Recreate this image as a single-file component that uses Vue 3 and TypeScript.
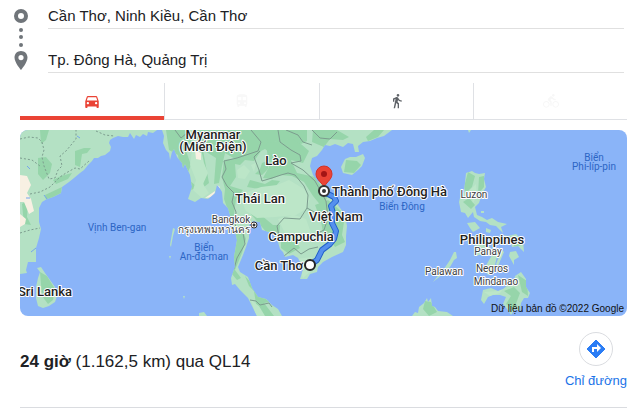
<script setup lang="ts">
import { ref } from 'vue'

interface MapLabel {
  text: string
  x: number
  y: number
  kind: 'country' | 'place' | 'sea'
  anchor?: 'start' | 'middle' | 'end'
}

const origin = ref('Cần Thơ, Ninh Kiều, Cần Thơ')
const destination = ref('Tp. Đông Hà, Quảng Trị')
const mode = ref('car')

const labels: MapLabel[] = [
  { text: 'Myanmar', x: 213, y: 139, kind: 'country' },
  { text: '(Miến Điện)', x: 213, y: 151, kind: 'country' },
  { text: 'Lào', x: 276, y: 165, kind: 'country' },
  { text: 'Thái Lan', x: 260, y: 203, kind: 'country' },
  { text: 'Campuchia', x: 301, y: 241, kind: 'country' },
  { text: 'Việt Nam', x: 336, y: 221, kind: 'country' },
  { text: 'Philippines', x: 492, y: 244, kind: 'country' },
  { text: 'Sri Lanka', x: 45, y: 296, kind: 'country' },
  { text: 'Cần Thơ', x: 303, y: 270, kind: 'country', anchor: 'end' },
  { text: 'Thành phố Đông Hà', x: 332, y: 196, kind: 'country', anchor: 'start' },
  { text: 'Bangkok', x: 231, y: 223, kind: 'place' },
  { text: 'กรุงเทพมหานคร', x: 214, y: 233, kind: 'place' },
  { text: 'Luzon', x: 474, y: 198, kind: 'place' },
  { text: 'Panay', x: 488, y: 255, kind: 'place' },
  { text: 'Negros', x: 492, y: 272, kind: 'place' },
  { text: 'Mindanao', x: 496, y: 285, kind: 'place' },
  { text: 'Palawan', x: 444, y: 275, kind: 'place' },
  { text: 'Vịnh Ben-gan', x: 117, y: 231, kind: 'sea' },
  { text: 'Biển', x: 204, y: 251, kind: 'sea' },
  { text: 'An-đa-man', x: 204, y: 260, kind: 'sea' },
  { text: 'Biển Đông', x: 402, y: 210, kind: 'sea' },
  { text: 'Biển', x: 594, y: 161, kind: 'sea' },
  { text: 'Phi-líp-pin', x: 594, y: 170, kind: 'sea' },
]
</script>

<template>
  <main class="directions">
    <form class="route" @submit.prevent>
      <svg class="route-marks" viewBox="0 0 16 66" aria-hidden="true">
        <circle cx="8" cy="8" r="5" fill="none" stroke="#70757a" stroke-width="4" />
        <g fill="#70757a">
          <circle cx="8" cy="22" r="2" />
          <circle cx="8" cy="29" r="2" />
          <circle cx="8" cy="37" r="2" />
          <path fill-rule="evenodd" d="M8 43c-3.700 0-6.500 2.800-6.500 6.500C1.500 54.500 8 62 8 62s6.500-7.500 6.500-12.500C14.500 45.800 11.700 43 8 43zm0 4a2.600 2.600 0 1 1 0 5.200A2.600 2.600 0 0 1 8 47z" />
        </g>
      </svg>
      <div class="fields">
        <input v-model="origin" class="field" type="text" aria-label="Điểm đi" />
        <input v-model="destination" class="field" type="text" aria-label="Điểm đến" />
      </div>
    </form>

    <nav class="modes">
      <button class="mode" :class="{ active: mode === 'car' }" type="button" aria-label="Lái xe" @click="mode = 'car'">
        <svg class="mode-icon" viewBox="0 0 24 24" fill="#ea4335">
          <path d="M18.920 5.010C18.720 4.420 18.160 4 17.500 4h-11c-.66 0-1.210.42-1.420 1.010L3 11v8c0 .55.45 1 1 1h1c.55 0 1-.45 1-1v-1h12v1c0 .55.45 1 1 1h1c.55 0 1-.45 1-1v-8l-2.080-5.990zM6.500 15c-.83 0-1.500-.67-1.500-1.500S5.670 12 6.500 12s1.500.67 1.500 1.500S7.330 15 6.500 15zm11 0c-.83 0-1.500-.67-1.500-1.500s.67-1.500 1.500-1.500 1.500.67 1.500 1.500-.67 1.500-1.500 1.500zM5 10l1.500-4.500h11L19 10H5z" />
        </svg>
      </button>
      <button class="mode" :class="{ active: mode === 'transit' }" type="button" aria-label="Phương tiện công cộng" disabled>
        <svg class="mode-icon small" viewBox="0 0 24 24" fill="#f8f8f8">
          <path d="M12 2c-4.420 0-8 .5-8 4v10c0 .88.39 1.670 1 2.220V20c0 .55.45 1 1 1h1c.55 0 1-.45 1-1v-1h8v1c0 .55.45 1 1 1h1c.55 0 1-.45 1-1v-1.780c.61-.55 1-1.340 1-2.220V6c0-3.500-3.580-4-8-4zM7.500 17a1.500 1.500 0 1 1 0-3 1.500 1.500 0 0 1 0 3zm3.500-6H6V6h5v5zm2 0V6h5v5h-5zm3.500 6a1.500 1.500 0 1 1 0-3 1.500 1.500 0 0 1 0 3z" />
        </svg>
      </button>
      <button class="mode" :class="{ active: mode === 'walk' }" type="button" aria-label="Đi bộ" @click="mode = 'walk'">
        <svg class="mode-icon small" viewBox="0 0 24 24" fill="#5f6368">
          <path d="M13.500 5.500c1.100 0 2-.9 2-2s-.9-2-2-2-2 .9-2 2 .9 2 2 2zM9.800 8.900L7 23h2.100l1.800-8 2.100 2v6h2v-7.500l-2.100-2 .6-3C14.800 12 16.800 13 19 13v-2c-1.900 0-3.500-1-4.300-2.400l-1-1.600c-.4-.6-1-1-1.700-1-.3 0-.5.1-.8.1L6 8.300V13h2V9.600l1.800-.7" />
        </svg>
      </button>
      <button class="mode" :class="{ active: mode === 'bike' }" type="button" aria-label="Đạp xe" disabled>
        <svg class="mode-icon small" viewBox="0 0 24 24" fill="#f7f7f7">
          <path d="M15.500 5.500c1.100 0 2-.9 2-2s-.9-2-2-2-2 .9-2 2 .9 2 2 2zM5 12c-2.800 0-5 2.200-5 5s2.200 5 5 5 5-2.200 5-5-2.200-5-5-5zm0 8.500c-1.900 0-3.500-1.600-3.500-3.500s1.600-3.500 3.500-3.500 3.500 1.600 3.500 3.500-1.600 3.500-3.500 3.500zm5.800-10l2.400-2.400.8.8c1.300 1.300 3 2.100 5.100 2.100V9c-1.500 0-2.700-.6-3.600-1.500l-1.900-1.900c-.5-.4-1-.6-1.600-.6s-1.100.2-1.400.6L7.800 8.400c-.4.4-.6.9-.6 1.400 0 .6.2 1.100.6 1.400L11 14v5h2v-6.200l-2.200-2.300zM19 12c-2.800 0-5 2.200-5 5s2.200 5 5 5 5-2.200 5-5-2.200-5-5-5zm0 8.500c-1.900 0-3.500-1.600-3.500-3.500s1.600-3.500 3.500-3.500 3.500 1.600 3.500 3.500-1.600 3.500-3.500 3.500z" />
        </svg>
      </button>
    </nav>

    <svg class="map" viewBox="20 130 607 186" preserveAspectRatio="xMidYMid slice" role="img" aria-label="Bản đồ">
      <defs>
        <clipPath id="land-shape">
          <!-- India -->
          <path d="M20 130H157L153 133 148 132 147 136 143 134 140 137 136 135 134 139 130 133 128 137 123 137 118 136 113 138 110 140 109 143 111 147 110 151 105 155 101 156 98 158 94 158 92 161 88 165 84 170 80 173 74 178 69 182 62 187 61 193 57 195 53 197 47 199 42 202 39 208V222L41 229 39 238 36 248V262H28L26 270 27 273 20 274z" />
          <!-- Sri Lanka -->
          <path d="M37 268L41 267 45 273 50 280 55 287 57 296 55 302 49 306 43 308 38 306 36 298V287L38 278 40 272z" />
          <!-- Indochina and the southern coast of China -->
          <path d="M162 130L164 136 163 143 166 150 169 153 170 160 172 152 174 149 177 157 182 163 183 168 185 164 190 175 192 187 188 199 195 202 201 198 208 199 215 193 217 185 219 187 222 192 223 203 228 208 230 215 231 225 235 231 237 240 234 257 235 267 231 278 232 285 235 284 240 290 244 294 248 298 253 308 257 316H282L278 309 272 305 266 299 258 297 252 288 248 277 240 272 238 267 243 255 246 247 249 238V225L253 221 260 222 262 230 273 233 278 242 280 249 283 252 285 257 293 255 298 258 302 265 303 270 300 279 307 279 310 274 317 272 318 267 323 262 332 257 343 252 346 245V236L347 226 345 215 338 205 330 193 327 186 318 182 313 175 310 166 312 158 317 156 322 150 325 145 330 146 335 144 343 147 348 143 353 144 355 152H359L358 146 363 142 370 141 377 138 384 136 392 130z" />
          <!-- Hainan -->
          <path d="M341 167L345 159 350 157 356 157 363 154 365 158 362 166 358 170 352 175 343 173z" />
          <!-- Luzon -->
          <path d="M466 173L472 171 475 173 479 174 485 173 484 179 486 187 482 194 479 203 475 207 477 215 482 217 487 220 492 218 498 222 507 224 501 227 503 233 496 226 490 225 486 222 480 221 474 217 473 212 468 218 465 213 461 212 459 202 460 198 464 192z" />
          <!-- Visayan islands -->
          <path d="M467 223L475 222 480 228 473 232 470 228z" />
          <path d="M474 236L482 235 488 242 484 245 476 247z" />
          <path d="M486 228L491 230 490 233 486 232zM502 235L508 236 516 234 523 241 524 252 518 246 512 247 510 238zM474 246L483 245 491 247 485 253 476 256z" />
          <path d="M492 255L498 253 493 272 488 275 484 269zM502 250L504 252 498 266 496 264zM510 252L516 251 519 257 514 260 514 265 509 256zM503 265L508 265 506 271 502 269z" />
          <!-- Mindanao -->
          <path d="M481 300L483 290 491 288 498 291 503 289 508 285 514 284 515 276 521 272 526 279 526 287 530 293 528 298 524 298 521 303 520 311 515 309 511 315 507 309 503 304 506 297 500 295 493 295 488 297 484 304z" />
          <!-- Palawan and Borneo -->
          <path d="M454 252L456 252 457 258 454 260 450 267 443 274 433 282 437 277 444 269 450 260z" />
          <path d="M412 316L415 312 418 313 419 307 424 303 427 298 428 302 431 298 432 306 435 307 438 311 447 312 453 316z" />
          <!-- Small islands -->
          <path d="M173 228L175 229 173 236 171 247 170 245zM169 256L171 256 170 259zM183 296L185 296 184 299zM199 313L204 312 207 316H199zM468 130H471L469 133zM481 211H484V213H481z" />
        </clipPath>
      </defs>

      <rect x="20" y="130" width="607" height="186" fill="#8ab4f8" />
      <g clip-path="url(#land-shape)">
        <rect x="20" y="130" width="607" height="186" fill="#b4e1c4" />

        <!-- Forests -->
        <g fill="#96d5aa">
          <path d="M40 130H49L46 140 41 144zM38 158L46 157 52 164 50 173 43 180 38 174zM75 151L84 148 91 148 87 153 82 154 80 167 75 165zM53 180L61 176 72 173 68 179 56 184zM45 195L62 187 61 197 46 200zM22 204L28 200 27 217 31 225 24 224z" />
          <path d="M166 130H185L193 143 184 145 191 165 186 177 198 188 190 190 180 169 178 155 169 150zM195 130H265L282 151 277 158 265 149 247 158 237 160 225 153 222 166 219 183 214 184 216 158 203 150 209 183 204 187 199 160z" />
          <path d="M224 160L239 158 248 150 261 151 254 161 245 160 240 165 235 164 236 177 230 186 243 190 236 199 234 214 238 221 231 219 224 199 225 189 222 177zM266 143L294 138 309 151 303 163 291 160 297 173 315 177 328 196 322 207 313 196 304 182 292 176 281 175 271 179 263 178 269 167z" />
          <path d="M262 163L269 160 268 169 262 175 255 174 260 169zM250 180L265 184 272 180 280 181 275 187 260 189 247 187zM250 213L261 215 273 225 280 225 279 237 268 234zM315 205L328 200 341 211 344 222 342 235 345 242 335 247 329 237 323 233 321 221zM281 238L294 236 300 248 289 254 281 248z" />
          <path d="M233 231L243 231 246 239 242 253 235 270 241 278 237 280 232 274zM245 276L249 286 254 291 256 304 263 316H274L264 303 270 302 263 297 254 286z" />
          <path d="M265 130H307V141L301 144 292 139 268 143zM313 130H337L349 137 343 140 330 139 324 147 312 142zM374 130H384L378 137 368 141 366 137zM346 160L357 161 361 165 354 173 344 172z" />
          <path d="M468 172L475 176 472 187 466 193 464 187zM479 177L484 176 484 187 478 194zM463 202L469 198 475 205 471 209zM477 239L489 241 484 246zM510 236L523 244 515 248zM518 275L527 281 528 296 522 292zM504 291L514 287 520 293 514 309 506 304 511 296z" />
          <path d="M40 272L47 276 55 289 53 300 48 304 42 296zM425 301L431 302 437 312 429 316 423 309z" />
        </g>

        <!-- Lowlands -->
        <g fill="#bce6c8">
          <path d="M194 137L201 149 204 163 208 173 203 184 209 193 202 198 193 190 196 180 190 165zM237 170L244 165 250 171 245 179 238 178zM251 165L256 163 254 172zM237 197L250 191 261 187 277 185 289 180 304 189 310 199 306 209 296 215 275 217 257 218 246 211 242 202zM278 219L294 215 306 219 311 233 298 239 285 233zM296 259L312 257 313 269 303 278z" />
          <path d="M251 300L259 306 265 316H256zM470 190L476 184 477 196 473 203zM484 292L498 291 503 289 500 293 490 296z" />
        </g>

        <!-- Dry ground -->
        <g fill="#f8f0e3">
          <path d="M20 175L27 176 31 185 27 193 31 199 34 211 29 214 24 202 20 202zM20 214L26 219 25 224 20 227zM195 150L201 153 201 160 196 159zM205 198L215 191 214 197zM217 185L220 187 219 190z" />
        </g>

        <g fill="none" stroke="#7c9c8e" stroke-width="1">
          <path stroke-dasharray="2 2" d="M20 139L29 137 38 138 42 142 44 150 42 157 44 166 49 179 55 178 58 170 62 166 60 156 66 151 71 145 76 139 76 130M20 158L32 160 40 166M30 194L40 192 50 187 60 177 66 173 75 168 80 169 89 161M20 233L30 230 40 228M96 131L105 135 114 136" />
          <path d="M175 130L181 138 187 133 195 134M251 130L261 142 258 151 237 158 224 161 226 169 222 177 227 186 234 193 232 202 236 212 235 225 243 233 245 244 237 258 234 269M260 151L254 157 259 170 262 181 272 178 281 175 288 173 295 175 304 186 308 195 307 208M278 130L280 142 291 150 300 155 301 161 291 163 303 170 315 181 326 201 328 218 324 230 316 234M286 130L298 135 303 142 312 145M279 236L277 226 284 218 300 219 307 208 318 214M284 256L294 248 301 254 309 249 318 247M250 300L256 301 260 305 269 303 272 307M312 130L320 138 330 139 337 132" />
        </g>
        <g fill="none" stroke="#74a5ed" stroke-width="1">
          <path d="M27 166L30 169M26 198L30 198M44 195L47 199M77 136L80 138M31 252L36 248" />
        </g>
      </g>

      <!-- Driving route -->
      <g fill="none" stroke-linecap="round" stroke-linejoin="round">
        <path stroke="#2361ca" stroke-width="6" d="M324 192L334 197 336 201 331 206 333 213 332 223 336 231 334 239 330 244 322 250 317 260 310 265" />
        <path stroke="#5590ee" stroke-width="4" d="M324 192L334 197 336 201 331 206 333 213 332 223 336 231 334 239 330 244 322 250 317 260 310 265" />
      </g>

      <circle cx="254" cy="225" r="3" fill="#fff" stroke="#333" stroke-width="1" />
      <circle cx="254" cy="225" r="1.500" fill="#333" />

      <text
        v-for="(label, i) in labels"
        :key="i"
        :x="label.x"
        :y="label.y"
        :text-anchor="label.anchor ?? 'middle'"
        class="label"
        :class="label.kind"
      >{{ label.text }}</text>

      <path d="M324 188c-1-5-8-8-8-14a8 8 0 0 1 16 0c0 6-7 9-8 14z" fill="#ea4335" stroke="#d33426" stroke-width="1" />
      <circle cx="324" cy="174" r="3" fill="#a31515" />
      <circle cx="324" cy="191" r="5" fill="#fff" stroke="#333" stroke-width="2" />
      <circle cx="324" cy="191" r="2" fill="#333" />
      <circle cx="310" cy="265" r="5" fill="#fff" stroke="#222" stroke-width="2" />

      <text class="credit" x="624" y="312" text-anchor="end">Dữ liệu bản đồ ©2022 Google</text>
    </svg>

    <section class="summary">
      <p class="trip"><strong>24 giờ</strong> (1.162,5 km) qua QL14</p>
      <a class="go" href="#directions">
        <span class="go-disc">
          <svg class="go-icon" viewBox="0 0 20 20" aria-hidden="true">
            <path d="M10 1L19 10 10 19 1 10z" fill="#2b7df5" stroke="#2b7df5" stroke-width="1" stroke-linejoin="round" />
            <path d="M6 13V8H11V5L15 9 11 13V10H8V13z" fill="#fff" />
          </svg>
        </span>
        <span>Chỉ đường</span>
      </a>
    </section>
  </main>
</template>

<style>
body {
  margin: 0;
  background: #fff;
}
</style>

<style scoped>
.directions {
  padding: 0 13px 0 20px;
  font-family: "Liberation Sans", Arial, sans-serif;
  color: #202124;
}

.route {
  display: flex;
  gap: 19px;
  margin-left: -7px;
  padding: 8px 3px 0 0;
}

.route-marks {
  flex: none;
  width: 16px;
  height: 66px;
}

.fields {
  flex: 1;
  margin-top: -8px;
  display: grid;
  grid-template-rows: 29px 29px;
  row-gap: 15px;
}

.field {
  box-sizing: border-box;
  width: 100%;
  min-width: 0;
  padding: 3px 0 0;
  border: 0;
  border-bottom: 1px solid #e0e0e0;
  outline: 0;
  background: transparent;
  color: #202124;
  font: 15px/24px "Liberation Sans", Arial, sans-serif;
}

.modes {
  display: grid;
  grid-template-columns: 145fr 155fr 154fr 153fr;
  margin-top: 9px;
  height: 37px;
}

.mode {
  display: flex;
  align-items: center;
  justify-content: center;
  padding: 0;
  border: 0;
  border-right: 1px solid #dfe1e5;
  border-bottom: 1px solid #dfe1e5;
  background: #fff;
}

.mode:last-child {
  border-right: 0;
}

.mode.active {
  border-bottom: 0;
  box-shadow: inset 0 -4px #ea4335;
}

.mode-icon {
  width: 18px;
  height: 18px;
}

.mode-icon.small {
  width: 16px;
  height: 16px;
}

.map {
  display: block;
  width: 100%;
  margin-top: 10px;
  border-radius: 8px;
}

.label {
  font-family: Roboto, "Noto Sans", sans-serif;
  paint-order: stroke;
  stroke: #fff;
  stroke-linejoin: round;
}

.country {
  font-size: 13px;
  font-weight: 500;
  fill: #222;
  stroke-width: 2px;
}

.place {
  font-size: 10px;
  fill: #3c4043;
  stroke-width: 2px;
}

.sea {
  font-size: 10px;
  fill: #2c65c4;
  stroke: none;
}

.credit {
  font-size: 10px;
  fill: #111;
}

.summary {
  display: flex;
  align-items: flex-start;
  justify-content: space-between;
  padding: 16px 0 18px;
  border-bottom: 1px solid #dadce0;
}

.trip {
  margin: 18px 0 0;
  font-size: 17px;
  line-height: 24px;
}

.go {
  display: flex;
  flex-direction: column;
  align-items: center;
  gap: 7px;
  color: #1a73e8;
  font-size: 13px;
  line-height: 16px;
  text-decoration: none;
}

.go-disc {
  display: flex;
  align-items: center;
  justify-content: center;
  width: 32px;
  height: 32px;
  border: 1px solid #dadce0;
  border-radius: 50%;
}

.go-icon {
  width: 20px;
  height: 20px;
}
</style>
